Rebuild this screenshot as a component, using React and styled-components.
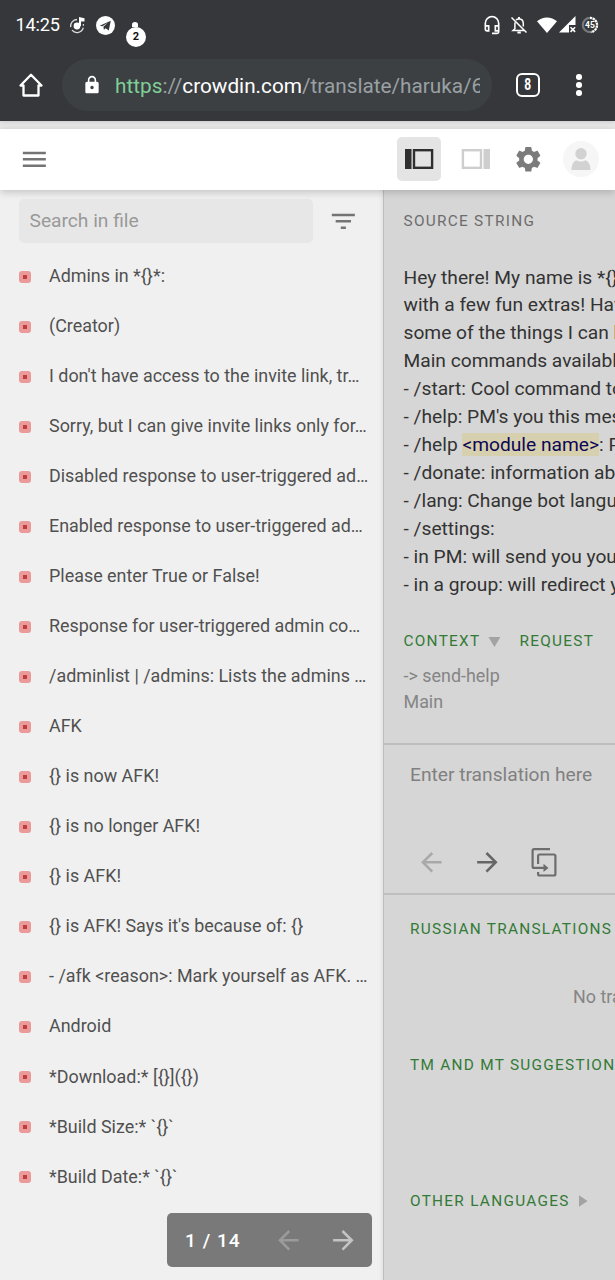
import React from 'react'
import styled, { createGlobalStyle } from 'styled-components'
import {
  MdArrowBack,
  MdArrowForward,
  MdFilterList,
  MdLock,
  MdMenu,
  MdOutlineHeadsetMic,
  MdSettings,
} from 'react-icons/md'

const strings = [
  'Admins in *{}*:',
  '(Creator)',
  "I don't have access to the invite link, tr…",
  'Sorry, but I can give invite links only for…',
  'Disabled response to user-triggered ad…',
  'Enabled response to user-triggered ad…',
  'Please enter True or False!',
  'Response for user-triggered admin co…',
  '/adminlist | /admins: Lists the admins …',
  'AFK',
  '{} is now AFK!',
  '{} is no longer AFK!',
  '{} is AFK!',
  "{} is AFK! Says it's because of: {}",
  '- /afk <reason>: Mark yourself as AFK. …',
  'Android',
  '*Download:* [{}]({})',
  '*Build Size:* `{}`',
  '*Build Date:* `{}`',
]

const StatusBar = () => (
  <Status>
    <Clock>14:25</Clock>
    <MusicIcon />
    <TelegramIcon />
    <Notification>
      <NotificationDot />
      <NotificationCount>2</NotificationCount>
    </Notification>
    <StatusRight>
      <MdOutlineHeadsetMic size={20} />
      <BellOffIcon />
      <WifiIcon />
      <SignalIcon />
      <Battery>
        <BatteryRing />
        <BatteryText>45</BatteryText>
      </Battery>
    </StatusRight>
  </Status>
)

const MusicIcon = () => (
  <svg width="18" height="20" viewBox="0 0 18 20" fill="none">
    <circle cx="7" cy="11" r="3.400" fill="#fff" />
    <path d="M9 11V2l5.500 1.300v3.200H11V11z" fill="#fff" />
    <path d="M7 4.500a6.500 6.500 0 0 0-6.200 7.700M2 15.200a6.500 6.500 0 0 0 11.300-2.500M13.500 10.800l-.2-1.800" stroke="#ddd" strokeWidth="1.300" />
  </svg>
)

const TelegramIcon = () => (
  <svg width="19" height="19" viewBox="0 0 18 18">
    <circle cx="9" cy="9" r="9" fill="#fff" />
    <path d="M3.500 9.200 14 4.600l-1.900 9.200-3-2.300-1.600 1.600-.5-3 4.400-4-5.300 3.500z" fill="#36373b" />
  </svg>
)

const BellOffIcon = () => (
  <svg width="18" height="20" viewBox="0 0 18 20" fill="none" stroke="#fff" strokeWidth="1.500">
    <path d="M1.500 2.500l15 15M6 4.800C6.800 4.200 7.800 4 9 4c2.800 0 4.300 2 4.300 4.600v3M4.900 7.500v6.200L3 15.500h11" />
    <path d="M9 2v2M7.400 17.500h3.400" strokeWidth="2" />
  </svg>
)

const WifiIcon = () => (
  <svg width="20" height="16" viewBox="0 0 20 16">
    <path d="M0 4.200C5.700-.9 14.300-.9 20 4.200L10 16z" fill="#fff" />
  </svg>
)

const SignalIcon = () => (
  <svg width="18" height="17" viewBox="0 0 18 17">
    <path d="M0 16.500 16.500 0v9H10v7.500z" fill="#fff" />
    <path d="M11.500 11.300l4.600 4.600M16.100 11.300l-4.600 4.600" stroke="#fff" strokeWidth="1.600" />
  </svg>
)

const BatteryRing = () => (
  <svg width="18" height="18" viewBox="0 0 18 18" fill="none" strokeWidth="2.200">
    <circle cx="9" cy="9" r="7.200" stroke="#77787b" />
    <path d="M9 1.800a7.200 7.200 0 0 1 1 14.300" stroke="#fff" strokeDasharray="2 0.900" />
  </svg>
)

const HomeIcon = () => (
  <svg width="24" height="24" viewBox="0 0 24 24" fill="none" stroke="#fff" strokeWidth="2.300" strokeLinejoin="round">
    <path d="M1.500 12.500 12 1.800l10.500 10.700h-3V22.500h-15v-10z" />
  </svg>
)

const PanelIcon = ({ color, right }) => (
  <svg width="29" height="20" viewBox="0 0 29 20" transform={right ? 'scale(-1 1)' : undefined}>
    <rect width="6.500" height="20" fill={color} />
    <rect x="9" y="1.200" width="18.100" height="17.600" fill="none" stroke={color} strokeWidth="2.400" />
  </svg>
)

const CopySourceIcon = () => (
  <svg width="26" height="30" viewBox="0 0 26 30" fill="none" stroke="#6d6d6d" strokeWidth="2.200">
    <path d="M19 2.100H3.100a1.500 1.500 0 0 0-1.500 1.500v15.800a1.500 1.500 0 0 0 1.500 1.500H13" />
    <path d="M7.100 17V9a1.500 1.500 0 0 1 1.500-1.500h14.300A1.500 1.500 0 0 1 24.400 9v18a1.500 1.500 0 0 1-1.500 1.500H8.600a1.500 1.500 0 0 1-1.500-1.500V25" />
    <path d="M12.500 16.700v8.400l5-4.200z" fill="#6d6d6d" stroke="none" />
  </svg>
)

const AvatarIcon = () => (
  <svg width="36" height="36" viewBox="0 0 36 36">
    <circle cx="18" cy="18" r="18" fill="#f6f6f6" />
    <circle cx="18" cy="12.800" r="5.700" fill="#d2d2d2" />
    <path d="M8.500 29c0-5 1.800-8.500 5-9.700 2.600 1.700 6.400 1.700 9 0 3.200 1.200 5 4.700 5 9.700z" fill="#d2d2d2" />
  </svg>
)

const AddressBar = () => (
  <Address>
    <HomeIcon />
    <UrlField>
      <MdLock size={20} color="#fff" />
      <Url>
        <Scheme>https</Scheme>://<Host>crowdin.com</Host>/translate/haruka/6
      </Url>
    </UrlField>
    <TabCount>
      <TabNumber>8</TabNumber>
    </TabCount>
    <Menu>
      <MenuDot />
      <MenuDot />
      <MenuDot />
    </Menu>
  </Address>
)

const FileList = () => (
  <Sidebar>
    <SearchRow>
      <Search placeholder="Search in file" />
      <MdFilterList size={30.7} color="#747474" />
    </SearchRow>
    {strings.map((text) => (
      <StringRow key={text}>
        <StatusMark />
        <StringText>{text}</StringText>
      </StringRow>
    ))}
    <Pager>
      <PageNumber>1 / 14</PageNumber>
      <MdArrowBack size={30.7} color="#9b9b9b" />
      <MdArrowForward size={30.7} color="#c4c4c4" />
    </Pager>
  </Sidebar>
)

const Editor = () => (
  <EditorPanel>
    <SourceBlock>
      <Label>Source string</Label>
      <SourceText>
        Hey there! My name is *{'{}'}*.{'\n'}
        with a few fun extras! Have a{'\n'}
        some of the things I can help{'\n'}
        Main commands available:{'\n'}
        - /start: Cool command to{'\n'}
        - /help: PM's you this message{'\n'}
        - /help <Tag>&lt;module name&gt;</Tag>: PM's you{'\n'}
        - /donate: information about{'\n'}
        - /lang: Change bot language{'\n'}
        - /settings:{'\n'}
        - in PM: will send you your{'\n'}
        - in a group: will redirect you
      </SourceText>
      <ContextRow>
        <Label $green>Context</Label>
        <Triangle $down />
        <Label $green>Request</Label>
      </ContextRow>
      <ContextText>
        -&gt; send-help{'\n'}
        Main
      </ContextText>
    </SourceBlock>
    <TranslationBlock>
      <Translation>Enter translation here</Translation>
      <Tools>
        <MdArrowBack size={30.7} color="#a9a9a9" />
        <MdArrowForward size={30.7} color="#666" />
        <CopySourceIcon />
      </Tools>
    </TranslationBlock>
    <Suggestions>
      <Label $green>Russian translations</Label>
      <Empty>No translations</Empty>
      <Label $green>TM and MT suggestions</Label>
      <LanguageRow>
        <Label $green>Other languages</Label>
        <Triangle />
      </LanguageRow>
    </Suggestions>
  </EditorPanel>
)

const App = () => {
  return (
    <Page>
      <GlobalStyle />
      <Chrome>
        <StatusBar />
        <AddressBar />
      </Chrome>
      <Toolbar>
        <MdMenu size={30.7} color="#747474" />
        <ToolbarRight>
          <ViewButton $active>
            <PanelIcon color="#2f2f2f" />
          </ViewButton>
          <ViewButton>
            <PanelIcon color="#cecece" right />
          </ViewButton>
          <MdSettings size={30.7} color="#7b7b7b" />
          <AvatarIcon />
        </ToolbarRight>
      </Toolbar>
      <Main>
        <FileList />
        <Editor />
      </Main>
    </Page>
  )
}

export default App

const GlobalStyle = createGlobalStyle`
* {
  box-sizing: border-box;
}

body {
  margin: 0;
  font-family: Roboto, sans-serif;
  overflow: hidden;
}

svg {
  display: block;
  flex-shrink: 0;
}
`

const Page = styled.div`
width: 615px;
height: 1280px;
display: flex;
flex-direction: column;
overflow: hidden;
background-color: #e9e9ea;
`

const Chrome = styled.div`
height: 121px;
background-color: #36373b;
color: white;
flex-shrink: 0;
box-shadow: 0 1px 4px rgba(0, 0, 0, .15);
`

const Status = styled.div`
height: 50px;
display: flex;
align-items: center;
padding: 0 16px 0 15.500px;

>svg:nth-child(3){
  margin-left: 8.500px;
}
`

const Clock = styled.div`
width: 54px;
padding-bottom: 1px;
font-size: 18.200px;
letter-spacing: -.2px;
`

const Notification = styled.div`
display: flex;
flex-direction: column;
align-items: center;
margin: 19px 0 0 11px;
`

const NotificationDot = styled.div`
width: 6px;
height: 5px;
margin-right: 3px;
border-radius: 50% 50% 0 0;
background-color: white;
`

const NotificationCount = styled.div`
width: 20px;
height: 20px;
border-radius: 50%;
background-color: white;
color: #111;
font-size: 11px;
font-weight: 700;
line-height: 20px;
text-align: center;
`

const StatusRight = styled.div`
display: flex;
align-items: center;
margin: -1px 0 0 auto;

>svg:nth-child(2){
  margin: 0 9px 0 8px;
}

>svg:nth-child(4){
  margin: 0 4px 0 2px;
}
`

const Battery = styled.div`
display: grid;
place-items: center;

>*{
  grid-area: 1 / 1;
}
`

const BatteryText = styled.span`
font-size: 8.500px;
font-weight: 700;
`

const Address = styled.div`
height: 70px;
display: flex;
align-items: center;
padding: 0 0 0 19px;
`

const UrlField = styled.div`
width: 430px;
height: 52px;
margin-left: 19px;
padding: 0 12px 0 20px;
border-radius: 26px;
background-color: #3c4043;
display: flex;
align-items: center;
`

const Url = styled.div`
margin: 1px 0 0 13px;
flex: 1;
overflow: hidden;
white-space: nowrap;
font-size: 20.750px;
color: #9aa0a3;
`

const Scheme = styled.span`
color: #7fcf96;
`

const Host = styled.span`
color: white;
`

const TabCount = styled.div`
width: 24px;
height: 24px;
margin-left: 24px;
border: 2.500px solid white;
border-radius: 6px;
display: flex;
align-items: center;
justify-content: center;
`

const TabNumber = styled.span`
font-size: 16px;
font-weight: 700;
line-height: 1;
transform: scaleX(.75);
`

const Menu = styled.div`
margin-left: 36px;
display: flex;
flex-direction: column;
gap: 2.500px;
`

const MenuDot = styled.div`
width: 5.500px;
height: 5.500px;
border-radius: 50%;
background-color: white;
`

const Toolbar = styled.div`
height: 61px;
margin-top: 8px;
padding: 0 16.500px 0 19px;
display: flex;
align-items: center;
justify-content: space-between;
flex-shrink: 0;
background-color: white;
box-shadow: 0 2px 8px rgba(0, 0, 0, .2);
z-index: 1;
`

const ToolbarRight = styled.div`
display: flex;
align-items: center;
margin-top: -1px;

>svg:nth-child(3){
  margin: 0 19px 0 15.500px;
}
`

const ViewButton = styled.div`
width: 44px;
height: 44px;
margin-right: ${({ $active }) => ($active ? '12px' : 0)};
border-radius: 5px;
background-color: ${({ $active }) => ($active ? '#e4e4e4' : 'transparent')};
display: flex;
align-items: center;
justify-content: center;
`

const Main = styled.div`
flex: 1;
display: flex;
min-height: 0;
`

const Sidebar = styled.div`
width: 383px;
flex-shrink: 0;
display: flex;
flex-direction: column;
background-color: #f0f0f0;
box-shadow: inset -5px 0 4px -4px rgba(0, 0, 0, .08);
`

const SearchRow = styled.div`
height: 61px;
padding: 9px 0 0 19px;
display: flex;
align-items: flex-start;

>svg{
  margin: 7px 0 0 15px;
}
`

const Search = styled.input`
width: 294px;
height: 44px;
padding: 0 11px 2px 10.500px;
border: none;
border-radius: 5px;
background-color: #e7e7e7;
font: 19.200px Roboto, sans-serif;
outline: none;

&::placeholder{
  color: #999;
}
`

const StringRow = styled.div`
height: 50.030px;
display: flex;
align-items: center;
padding-left: 19px;
`

const StatusMark = styled.div`
width: 12px;
height: 12px;
margin: 2px 18px 0 0;
border: 4px solid #eb9a9a;
border-radius: 3px;
background-color: #c03d3d;
`

const StringText = styled.div`
padding-bottom: .5px;
font-size: 17.920px;
color: #505050;
white-space: nowrap;
`

const Pager = styled.div`
width: 205px;
height: 54px;
margin: 12px 0 0 167px;
padding-left: 18px;
display: flex;
align-items: center;
border-radius: 5px;
background-color: #797979;

>svg{
  margin-right: 25px;
}
`

const PageNumber = styled.div`
width: 87.500px;
flex-shrink: 0;
color: white;
font-size: 19.200px;
font-weight: 500;
letter-spacing: 1px;
`

const EditorPanel = styled.div`
flex: 1;
min-width: 0;
overflow: hidden;
white-space: nowrap;
border-left: 1px solid #bdbdbd;
background-color: #d6d6d6;
`

const SourceBlock = styled.div`
height: 555px;
padding: 20.500px 0 0 19.500px;
border-bottom: 2px solid #bfbfbf;
`

const Label = styled.div`
font-size: 15.360px;
line-height: 20px;
letter-spacing: 1.280px;
text-transform: uppercase;
color: ${({ $green }) => ($green ? '#337a37' : '#6d6d6d')};
`

const SourceText = styled.div`
margin-top: 33px;
white-space: pre;
font-size: 19.200px;
line-height: 27.950px;
color: #333;
`

const Tag = styled.span`
background-color: #d6d0ae;
color: #0d0757;
`

const ContextRow = styled.div`
display: flex;
align-items: center;
margin-top: 32px;

>div:nth-child(2){
  margin: 2px 19px 0 8px;
}
`

const Triangle = styled.div`
width: ${({ $down }) => ($down ? '12px' : '9px')};
height: ${({ $down }) => ($down ? '10px' : '12px')};
background-color: #a3a3a3;
clip-path: ${({ $down }) => ($down ? 'polygon(0 0, 100% 0, 50% 100%)' : 'polygon(0 0, 100% 50%, 0 100%)')};
`

const ContextText = styled.div`
margin-top: 12px;
white-space: pre;
font-size: 17.920px;
line-height: 25.600px;
color: #858585;
`

const TranslationBlock = styled.div`
height: 150px;
padding: 16px 0 0 26px;
border-bottom: 2px solid #bfbfbf;
`

const Translation = styled.div`
font-size: 19.200px;
line-height: 28px;
color: #808080;
`

const Tools = styled.div`
display: flex;
align-items: center;
margin: 58px 0 0 6px;

>svg:nth-child(2){
  margin: 0 28px 0 25.500px;
}
`

const Suggestions = styled.div`
padding: 24px 0 0 26px;
`

const Empty = styled.div`
height: 68px;
margin: 48px 0 0 163px;
font-size: 17.920px;
line-height: 20px;
color: #858585;
`

const LanguageRow = styled.div`
display: flex;
align-items: center;
margin-top: 116px;

>div:last-child{
  margin-left: 9px;
}
`
